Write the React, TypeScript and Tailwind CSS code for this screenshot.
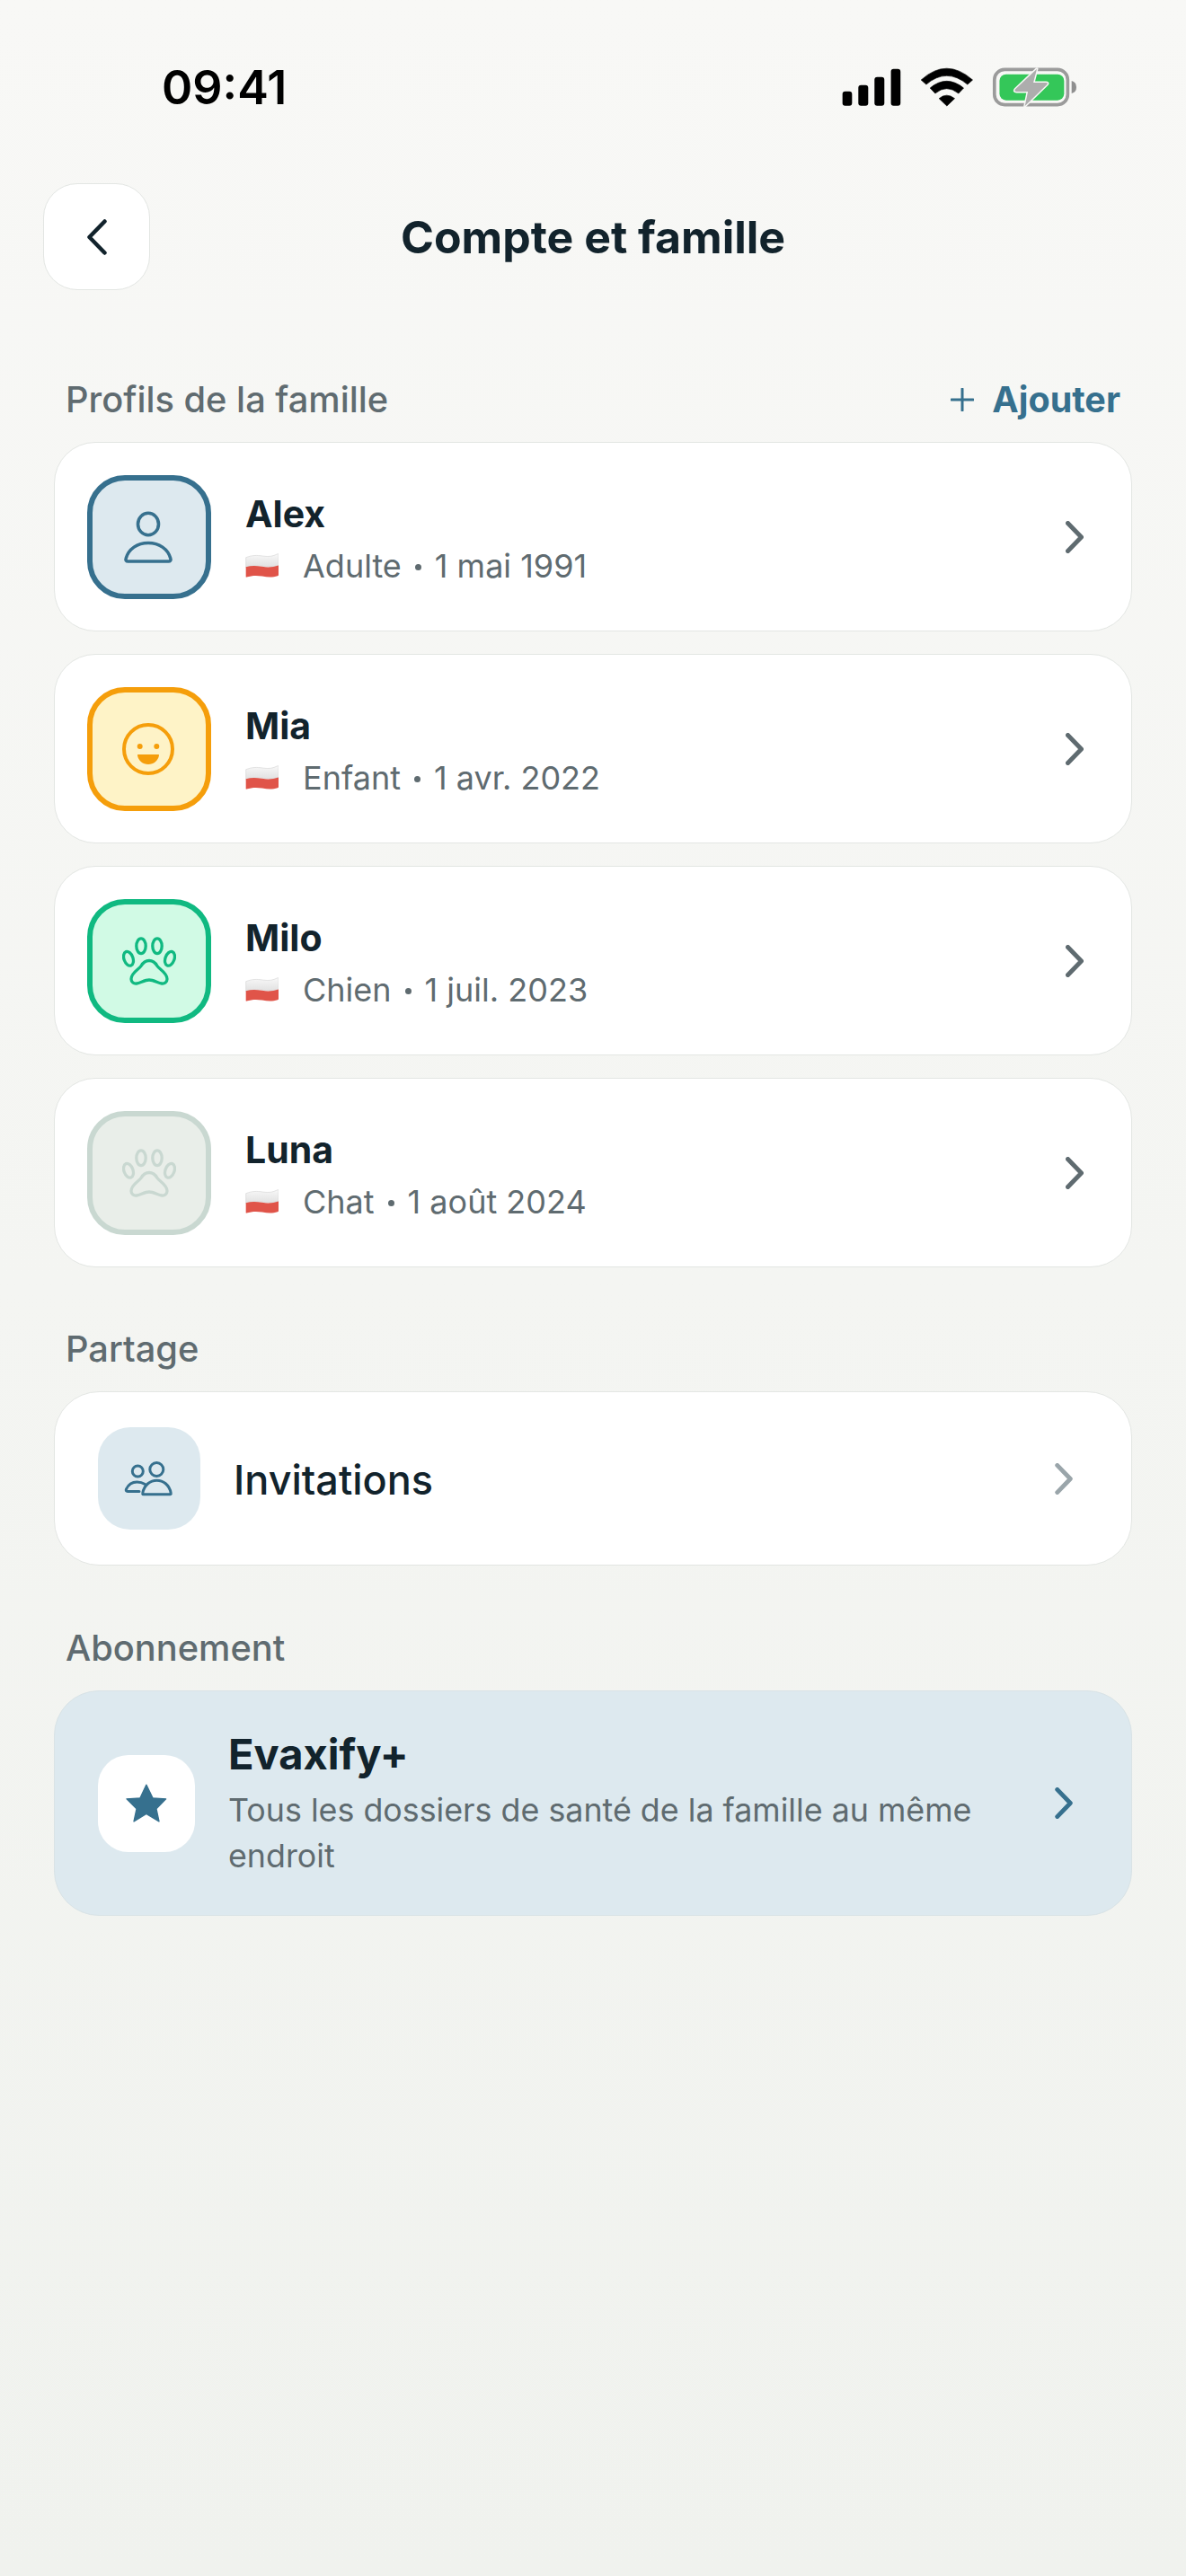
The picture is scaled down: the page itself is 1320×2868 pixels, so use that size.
import React from "react";

const Chevron = ({ color, tall }: { color: string; tall?: boolean }) => (
  <svg viewBox="0 0 20 36" fill="none" className={`${tall ? "h-[36px]" : "h-[35px]"} w-[20px] shrink-0`}>
    <path d="M2.5 2.5 L17.5 18 L2.5 33.5" stroke={color} strokeWidth="5" strokeLinecap="round" strokeLinejoin="round" />
  </svg>
);

const Flag = () => (
  <svg viewBox="0 0 110 80" className="w-[37px] h-[27px] shrink-0">
    <defs>
      <linearGradient id="fw" x1="0" y1="0" x2="0" y2="1">
        <stop offset="0" stopColor="#f8f8f8" />
        <stop offset="1" stopColor="#e0e0e0" />
      </linearGradient>
    </defs>
    <path d="M2 14 C22 6 38 6 58 9 S92 10 107 2 Q110 1 110 4 V40 C92 46 76 45 56 42 S20 42 2 47 Z" fill="url(#fw)" stroke="#d6d6d6" strokeWidth="2" />
    <path d="M2 45 C20 40 38 41 56 44 S92 46 110 40 V72 Q110 74 107 75 C92 80 76 80 56 76 S20 74 4 79 Q2 80 2 77 Z" fill="#e05449" />
  </svg>
);

const PawIcon = ({ color }: { color: string }) => (
  <svg viewBox="0 0 60 60" fill="none" stroke={color} strokeWidth="3.3" className="w-[60px] h-[60px]">
    <ellipse cx="21" cy="13.3" rx="5.2" ry="8.4" />
    <ellipse cx="39" cy="13.3" rx="5.2" ry="8.4" />
    <ellipse cx="7" cy="27.3" rx="5" ry="8.2" transform="rotate(-20 7 27.3)" />
    <ellipse cx="53" cy="27.3" rx="5" ry="8.2" transform="rotate(20 53 27.3)" />
    <path d="M30 29.5 C34 29.5 37 32 39 35.5 C41 39 50 43 50 50 C50 53.5 47 55.5 44 55 C40 54.5 35 51 30 51 C25 51 20 54.5 16 55 C13 55.5 10 53.5 10 50 C10 43 19 39 21 35.5 C23 32 26 29.5 30 29.5 Z" />
  </svg>
);

const PersonIcon = () => (
  <svg viewBox="0 0 60 60" fill="none" stroke="#36708e" strokeWidth="3.6" className="w-[60px] h-[60px]">
    <ellipse cx="29" cy="15.5" rx="11.5" ry="12.2" />
    <path d="M6.5 57 H51.5 C53.5 57 54.4 55.6 53.9 54 C51 43 41 36.5 29 36.5 S7 43 4.1 54 C3.6 55.6 4.5 57 6.5 57 Z" strokeLinejoin="round" />
  </svg>
);

const SmileIcon = () => (
  <svg viewBox="0 0 60 60" fill="none" className="w-[60px] h-[60px]">
    <circle cx="29" cy="30" r="27" stroke="#f59e0b" strokeWidth="4" />
    <circle cx="19.7" cy="27" r="3" fill="#f59e0b" />
    <circle cx="38.3" cy="27" r="3" fill="#f59e0b" />
    <path d="M17 37 Q16.5 36 18 36 H40 Q41.5 36 41 37 C40 43 35 47 29 47 S18 43 17 37 Z" fill="#f59e0b" />
  </svg>
);

const InviteIcon = () => (
  <svg viewBox="0 0 60 60" fill="none" stroke="#36708e" strokeWidth="3" strokeLinecap="round" className="w-[60px] h-[60px]">
    <circle cx="38.3" cy="20" r="7.5" />
    <path d="M23.5 47.8 H53.5 C54.3 47.8 54.5 47 54.2 46.3 C52.5 37 45.5 32.2 38.5 32.2 C31.5 32.2 24.5 37 22.8 46.3 C22.5 47 22.8 47.8 23.5 47.8 Z" />
    <circle cx="17.3" cy="22" r="6" />
    <path d="M19 44.5 H6 C4.5 44.5 3.8 43.5 4.5 42 C6.5 37.5 11 34 16.5 34 C20 34 23 35 25.5 36.5" />
  </svg>
);

const StatusIcons = () => (
  <svg viewBox="230 100 790 135" className="w-[263px] h-[45px]">
    <rect x="232" y="183" width="32" height="48" rx="9" fill="#000" />
    <rect x="285" y="162" width="33" height="69" rx="9" fill="#000" />
    <rect x="339" y="135" width="33" height="96" rx="9" fill="#000" />
    <rect x="394" y="108" width="32" height="123" rx="9" fill="#000" />
    <path d="M495 145 Q580 68 667 145 L650 160 Q580 102 512 160 Z" fill="#000" stroke="#000" strokeWidth="2" strokeLinejoin="round" />
    <path d="M525 172 Q580 126 637 172 L620 190 Q580 158 542 190 Z" fill="#000" stroke="#000" strokeWidth="2" strokeLinejoin="round" />
    <path d="M555 207 Q580 186 607 207 L581 232 Z" fill="#000" stroke="#000" strokeWidth="2" strokeLinejoin="round" />
    <rect x="740" y="110" width="245" height="118" rx="34" fill="none" stroke="#9b9b9b" strokeWidth="11" />
    <rect x="757" y="126" width="216" height="87" rx="22" fill="#34c759" />
    <path d="M998 148 Q1014 152 1014 169 Q1014 186 998 190 Z" fill="#8f8f8f" />
    <path d="M882 108 L810 176 Q804 184 814 184 H852 L842 232 L916 160 Q921 154 912 154 H870 Z" fill="#adadad" stroke="#f7f7f5" strokeWidth="9" strokeLinejoin="round" paintOrder="stroke" />
  </svg>
);

type P = { name: string; kind: string; date: string; box: string; icon: React.ReactNode };
const profiles: P[] = [
  { name: "Alex", kind: "Adulte", date: "1 mai 1991", box: "bg-[#dde9ef] border-[#36708e]", icon: <PersonIcon /> },
  { name: "Mia", kind: "Enfant", date: "1 avr. 2022", box: "bg-[#fef3c7] border-[#f59e0b]", icon: <SmileIcon /> },
  { name: "Milo", kind: "Chien", date: "1 juil. 2023", box: "bg-[#d1fae5] border-[#10b981]", icon: <PawIcon color="#10b981" /> },
  { name: "Luna", kind: "Chat", date: "1 août 2024", box: "bg-[#e9eee9] border-[#c9d8d1]", icon: <PawIcon color="#c9d8d1" /> },
];

const Label = ({ children }: { children: React.ReactNode }) => (
  <div className="text-[39.8px] leading-[46px] font-medium text-[#5f6b70]">{children}</div>
);

export default function App() {
  return (
    <div className="w-[1320px] h-[2868px] overflow-hidden bg-gradient-to-b from-[#f8f8f6] to-[#f0f2ee] font-['Inter',sans-serif]">
      <div className="h-[204px] flex items-start justify-between pl-[180px] pr-[120px] pt-[68px]">
        <div className="text-[52px] leading-[60px] font-semibold text-black">09:41</div>
        <div className="pt-[6px]"><StatusIcons /></div>
      </div>

      <div className="relative h-[119px] flex items-center justify-center">
        <div className="absolute left-[48px] top-0 w-[119px] h-[119px] rounded-[38px] bg-white border border-[#e3e6e3] flex items-center justify-center">
          <svg viewBox="0 0 22 40" fill="none" className="w-[22px] h-[40px]">
            <path d="M19.5 2.5 L2.5 20 L19.5 37.5" stroke="#12232c" strokeWidth="4.5" strokeLinecap="round" strokeLinejoin="round" />
          </svg>
        </div>
        <div className="text-[50px] leading-[60px] font-bold text-[#12232c]">Compte et famille</div>
      </div>

      <div className="px-[60px]">
        <div className="mt-[99px] mb-[24px] pl-[13px] pr-[13px] flex items-center justify-between">
          <Label>Profils de la famille</Label>
          <div className="flex items-center gap-[20px] text-[39.5px] leading-[46px] font-bold text-[#36708e]">
            <svg viewBox="0 0 26 26" className="w-[26px] h-[26px]" fill="none">
              <path d="M13 1 V25 M1 13 H25" stroke="#36708e" strokeWidth="3" strokeLinecap="round" />
            </svg>
            <span>Ajouter</span>
          </div>
        </div>

        <div className="flex flex-col gap-[25px]">
          {profiles.map((p) => (
            <div key={p.name} className="h-[211px] rounded-[46px] bg-white border border-[#e3e6e3] flex items-center pl-[36px] pr-[53px]">
              <div className={`w-[138px] h-[138px] rounded-[42px] border-[6px] flex items-center justify-center shrink-0 ${p.box}`}>
                {p.icon}
              </div>
              <div className="ml-[38px] flex-1 pt-[5px]">
                <div className="text-[41px] leading-[52px] font-bold text-[#12232c]">{p.name}</div>
                <div className="mt-[7px] flex items-center text-[36px] leading-[50px] text-[#5f6b70]">
                  <Flag />
                  <span className="ml-[27px]">{p.kind}</span>
                  <span className="mx-[15px] w-[7px] h-[7px] rounded-full bg-[#5f6b70] mt-[4px]"></span>
                  <span>{p.date}</span>
                </div>
              </div>
              <Chevron color="#5f6b70" tall />
            </div>
          ))}
        </div>

        <div className="mt-[68px] mb-[24px] pl-[13px]"><Label>Partage</Label></div>
        <div className="h-[194px] rounded-[50px] bg-white border border-[#e3e6e3] flex items-center pl-[48px] pr-[65px]">
          <div className="w-[114px] h-[114px] rounded-[36px] bg-[#dde9ef] flex items-center justify-center shrink-0">
            <InviteIcon />
          </div>
          <div className="ml-[37px] flex-1 pt-[3px] text-[45px] leading-[56px] font-medium text-[#12232c]">Invitations</div>
          <Chevron color="#9aa5aa" />
        </div>

        <div className="mt-[69px] mb-[24px] pl-[13px]"><Label>Abonnement</Label></div>
        <div className="h-[251px] rounded-[50px] bg-[#dde9ef] border border-[#d9e3e6] flex items-center pl-[48px] pr-[65px]">
          <div className="w-[108px] h-[108px] rounded-[34px] bg-white flex items-center justify-center shrink-0">
            <svg viewBox="270 380 138 128" className="w-[46px] h-[43px]">
              <polygon points="338.5,383 360,427 404,430 372,463 381,505 338.5,480 297,505 306,463 273,430 318,427" fill="#36708e" stroke="#36708e" strokeWidth="4" strokeLinejoin="round" />
            </svg>
          </div>
          <div className="ml-[37px] flex-1 pt-[1px]">
            <div className="text-[47px] leading-[56px] font-bold text-[#12232c]">Evaxify+</div>
            <div className="mt-[9px] text-[35.8px] leading-[51px] text-[#5f6b70]">Tous les dossiers de santé de la famille au même endroit</div>
          </div>
          <div className="ml-[44px]"><Chevron color="#36708e" /></div>
        </div>
      </div>
    </div>
  );
}
